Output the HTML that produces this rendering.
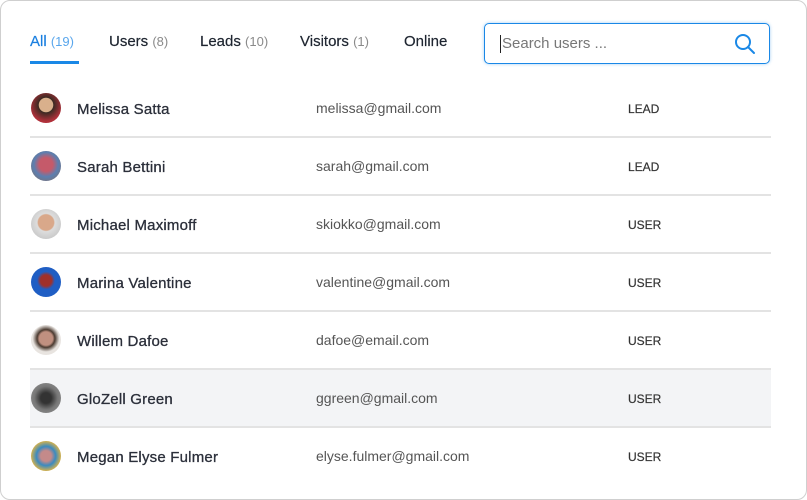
<!DOCTYPE html>
<html><head><style>
*{box-sizing:border-box;margin:0;padding:0}
body{width:807px;height:500px;background:#fff;font-family:"Liberation Sans",sans-serif;overflow:hidden}
.card{position:absolute;left:0;top:0;width:807px;height:500px;border:1px solid #cfcfcf;border-radius:10px;background:#fff}
.tab{position:absolute;top:32px;font-size:15px;color:#1e2530;-webkit-text-stroke:.2px #1e2530}
.tab span{color:#8a8a8a;font-size:13px;-webkit-text-stroke:0}
.tab.act{color:#1a7fe0;-webkit-text-stroke:.2px #1a7fe0}
.tab.act span{color:#59a6ec}
.ul{position:absolute;left:29px;top:60px;width:49px;height:3px;background:#1a88e6}
.search{position:absolute;left:483px;top:22px;width:286px;height:41px;border:1px solid #1a88e6;border-radius:5px;box-shadow:0 0 3px rgba(26,136,230,.4)}
.search .ph{position:absolute;left:15px;top:11px;font-size:15px;color:#777;border-left:1px solid #222;padding-left:1px;line-height:18px}
.search svg{position:absolute;right:13px;top:9px}
.row{position:absolute;left:29px;width:741px;height:58px;border-bottom:2px solid #e3e3e3}
.row.hl{background:#f3f4f6}
.av{position:absolute;left:1px;top:13px;width:30px;height:30px;border-radius:50%}
.nm{position:absolute;left:47px;top:21px;font-size:15px;color:#2b2f3a;letter-spacing:.2px;-webkit-text-stroke:.3px #2b2f3a}
.em{position:absolute;left:286px;top:20px;font-size:14px;color:#555}
.rl{position:absolute;left:598px;top:22px;font-size:12px;color:#333;-webkit-text-stroke:.2px #333}
</style></head><body>
<div class="card">
<div class="tab act" style="left:29px">All <span>(19)</span></div>
<div class="tab" style="left:108px">Users <span>(8)</span></div>
<div class="tab" style="left:199px">Leads <span>(10)</span></div>
<div class="tab" style="left:299px">Visitors <span>(1)</span></div>
<div class="tab" style="left:403px">Online</div>
<div class="ul"></div>
<div class="search"><div class="ph">Search users ...</div>
<svg width="22" height="22" viewBox="0 0 22 22"><circle cx="9" cy="9" r="7" fill="none" stroke="#1a88e6" stroke-width="2"/><path d="M14 14l6 6" stroke="#1a88e6" stroke-width="2" stroke-linecap="round"/></svg></div>

<div class="row" style="top:79px"><div class="av" style="background:radial-gradient(circle at 50% 40%,#d9b08c 30%,#3a2a22 32%,#b0303a 70%)"></div><div class="nm">Melissa Satta</div><div class="em">melissa@gmail.com</div><div class="rl">LEAD</div></div>
<div class="row" style="top:137px"><div class="av" style="background:radial-gradient(circle at 50% 45%,#c55a6a 30%,#5c7fb0 55%,#8a6a5a)"></div><div class="nm">Sarah Bettini</div><div class="em">sarah@gmail.com</div><div class="rl">LEAD</div></div>
<div class="row" style="top:195px"><div class="av" style="background:radial-gradient(circle at 50% 45%,#d9a88a 35%,#ddd 40%,#bbb)"></div><div class="nm">Michael Maximoff</div><div class="em">skiokko@gmail.com</div><div class="rl">USER</div></div>
<div class="row" style="top:253px"><div class="av" style="background:radial-gradient(circle at 50% 45%,#a0302a 25%,#1f5ec4 40%)"></div><div class="nm">Marina Valentine</div><div class="em">valentine@gmail.com</div><div class="rl">USER</div></div>
<div class="row" style="top:311px"><div class="av" style="background:radial-gradient(circle at 50% 45%,#c09080 30%,#4a3a30 40%,#e8e4e0 60%)"></div><div class="nm">Willem Dafoe</div><div class="em">dafoe@email.com</div><div class="rl">USER</div></div>
<div class="row hl" style="top:369px"><div class="av" style="background:radial-gradient(circle at 50% 50%,#333 25%,#777 55%,#999)"></div><div class="nm">GloZell Green</div><div class="em">ggreen@gmail.com</div><div class="rl">USER</div></div>
<div class="row" style="top:427px;border-bottom:none"><div class="av" style="background:radial-gradient(circle at 50% 50%,#c48a8a 25%,#3a8ac0 45%,#d0b050 70%)"></div><div class="nm">Megan Elyse Fulmer</div><div class="em">elyse.fulmer@gmail.com</div><div class="rl">USER</div></div>
</div>
</body></html>
